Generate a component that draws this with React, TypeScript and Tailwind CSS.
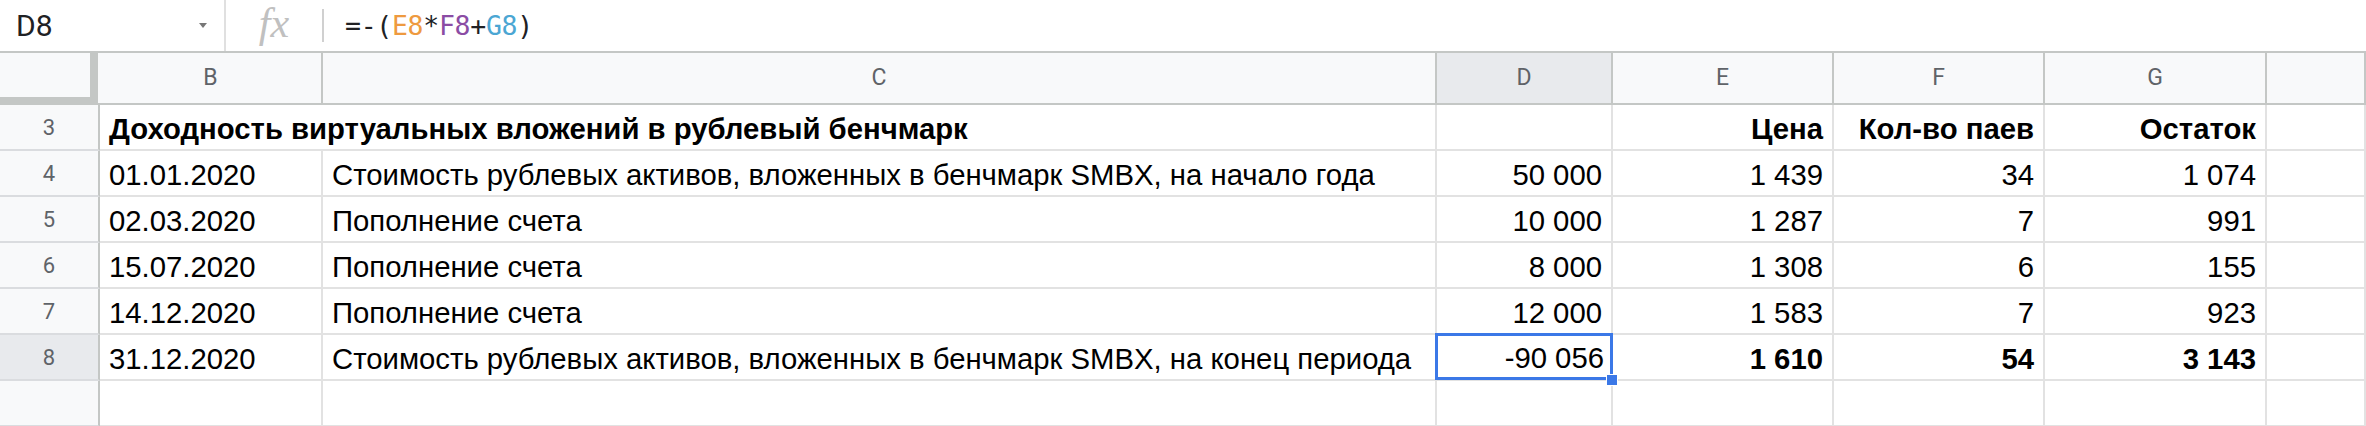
import React from 'react'

const cols = 'grid-cols-[100px_223px_1114px_176px_221px_211px_222px_1fr]'

type Row = {
  n: number
  b?: string
  c?: string
  d?: string
  e?: string
  f?: string
  g?: string
  bold?: boolean
}

const rows: Row[] = [
  { n: 4, b: '01.01.2020', c: 'Стоимость рублевых активов, вложенных в бенчмарк SMBX, на начало года', d: '50 000', e: '1 439', f: '34', g: '1 074' },
  { n: 5, b: '02.03.2020', c: 'Пополнение счета', d: '10 000', e: '1 287', f: '7', g: '991' },
  { n: 6, b: '15.07.2020', c: 'Пополнение счета', d: '8 000', e: '1 308', f: '6', g: '155' },
  { n: 7, b: '14.12.2020', c: 'Пополнение счета', d: '12 000', e: '1 583', f: '7', g: '923' },
  { n: 8, b: '31.12.2020', c: 'Стоимость рублевых активов, вложенных в бенчмарк SMBX, на конец периода', d: '-90 056', e: '1 610', f: '54', g: '3 143', bold: true },
]

function RowNum({ n, active }: { n?: number; active?: boolean }) {
  return (
    <div
      className={`h-[46px] flex items-center justify-center border-r-2 border-b-2 border-r-[#c4c7c5] border-b-[#dadcdf] text-[22px] text-[#5f6368] font-['Roboto',sans-serif] ${
        active ? 'bg-[#e8eaed]' : 'bg-[#f8f9fa]'
      }`}
    >
      {n}
    </div>
  )
}

function Cell({ children, right, bold }: { children?: React.ReactNode; right?: boolean; bold?: boolean }) {
  return (
    <div
      className={`h-[46px] flex items-end pb-[6px] px-[9px] leading-none whitespace-nowrap border-b-2 border-r-2 border-[#e2e2e2] ${
        right ? 'justify-end' : 'justify-start'
      } ${bold ? 'font-bold' : ''}`}
    >
      {children}
    </div>
  )
}

export default function App() {
  return (
    <div className="w-[2366px] h-[426px] overflow-hidden bg-white text-black font-['Liberation_Sans',Arial,sans-serif] text-[29.3px]">
      {/* formula bar */}
      <div className="h-[53px] flex items-stretch border-b-2 border-[#c4c7c5]">
        <div className="w-[224px] flex items-center justify-between pl-[16px] pr-[17px] text-[30px] text-[#202124] font-['Roboto',sans-serif]">
          <span>D8</span>
          <span className="w-0 h-0 border-l-[4px] border-r-[4px] border-t-[5px] border-l-transparent border-r-transparent border-t-[#777]" />
        </div>
        <div className="w-[2px] bg-[#e0e0e0]" />
        <div className="w-[96px] flex items-center justify-center text-[42px] italic text-[#c0c0c0] font-['Liberation_Serif',serif] pb-[4px]">
          fx
        </div>
        <div className="w-[2px] my-[9px] bg-[#d0d0d0]" />
        <div className="flex items-center pl-[21px] text-[26.5px] font-['DejaVu_Sans_Mono',monospace] text-[#202124] tracking-[-0.3px]">
          <span>=-(</span>
          <span className="text-[#ee9a3f]">E8</span>
          <span>*</span>
          <span className="text-[#8b4ca4]">F8</span>
          <span>+</span>
          <span className="text-[#4ba6d3]">G8</span>
          <span>)</span>
        </div>
      </div>

      {/* column headers */}
      <div className={`grid ${cols} h-[52px] bg-[#f8f9fa] border-b-2 border-[#c4c7c5] text-[23px] text-[#5f6368] font-['Roboto',sans-serif]`}>
        <div className="border-r-[8px] border-b-[6px] border-[#c4c7c5] bg-[#f8f9fa] mr-[2px]" />
        {['B', 'C', 'D', 'E', 'F', 'G', ''].map((l) => (
          <div
            key={l || 'H'}
            className={`flex items-center justify-center border-r-2 border-[#c4c7c5] ${l === 'D' ? 'bg-[#e8eaed]' : ''}`}
          >
            {l}
          </div>
        ))}
      </div>

      {/* row 3 */}
      <div className={`grid ${cols}`}>
        <RowNum n={3} />
        <div className="col-span-2 h-[46px] flex items-end pb-[6px] px-[9px] leading-none whitespace-nowrap font-bold border-b-2 border-r-2 border-[#e2e2e2]">
          Доходность виртуальных вложений в рублевый бенчмарк
        </div>
        <Cell />
        <Cell right bold>Цена</Cell>
        <Cell right bold>Кол-во паев</Cell>
        <Cell right bold>Остаток</Cell>
        <Cell />
      </div>

      {rows.map((r) => (
        <div key={r.n} className={`grid ${cols}`}>
          <RowNum n={r.n} active={r.n === 8} />
          <Cell>{r.b}</Cell>
          <Cell>{r.c}</Cell>
          {r.n === 8 ? (
            <div className="relative h-[46px] border-b-2 border-r-2 border-[#e2e2e2]">
              <div className="absolute -left-[2px] -top-[2px] right-[-2px] bottom-[-1px] border-[3px] border-[#3b78e7] flex items-end justify-end pb-[5px] pr-[6px] leading-none">
                -90 056
              </div>
              <div className="absolute -right-[7px] -bottom-[7px] w-[12px] h-[12px] bg-[#3b78e7] border border-white" />
            </div>
          ) : (
            <Cell right>{r.d}</Cell>
          )}
          <Cell right bold={r.bold}>{r.e}</Cell>
          <Cell right bold={r.bold}>{r.f}</Cell>
          <Cell right bold={r.bold}>{r.g}</Cell>
          <Cell />
        </div>
      ))}

      {/* empty row 9 */}
      <div className={`grid ${cols}`}>
        <RowNum />
        <Cell />
        <Cell />
        <Cell />
        <Cell />
        <Cell />
        <Cell />
        <Cell />
      </div>
    </div>
  )
}
